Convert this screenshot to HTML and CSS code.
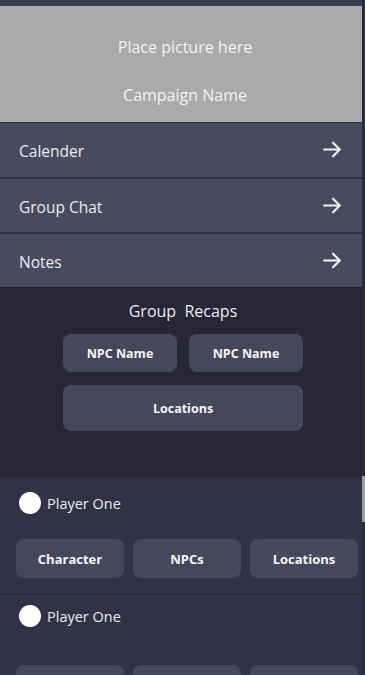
FILE: index.html
```html
<!DOCTYPE html>
<html lang="en">
<head>
    <meta charset="UTF-8">
    <meta name="viewport" content="width=device-width, initial-scale=1.0">
    <title>Campaign</title>
    <link rel="stylesheet" href="styles.css">
</head>
<body>
    <div class="page">
        <div class="app">
            <div class="top-strip"></div>

            <!-- cover picture placeholder -->
            <div class="cover">
                <p class="cover_text">Place picture here</p>
                <p class="cover_text">Campaign Name</p>
            </div>

            <div class="nav-row">
                <span>Calender</span>
                <svg class="arrow" viewBox="0 0 20 20"><path d="M2 10h15M10.5 3.5L17 10l-6.5 6.5"/></svg>
            </div>
            <div class="nav-row">
                <span>Group Chat</span>
                <svg class="arrow" viewBox="0 0 20 20"><path d="M2 10h15M10.5 3.5L17 10l-6.5 6.5"/></svg>
            </div>
            <div class="nav-row">
                <span>Notes</span>
                <svg class="arrow" viewBox="0 0 20 20"><path d="M2 10h15M10.5 3.5L17 10l-6.5 6.5"/></svg>
            </div>

            <div class="recaps">
                <h2 class="recaps_title">Group&nbsp; Recaps</h2>
                <div class="recaps_grid">
                    <button class="btn">NPC Name</button>
                    <button class="btn">NPC Name</button>
                    <button class="btn btn-wide">Locations</button>
                </div>
            </div>

            <div class="player">
                <div class="player_head">
                    <span class="avatar"></span>
                    <span>Player One</span>
                </div>
                <div class="player_btns">
                    <button class="btn btn-player">Character</button>
                    <button class="btn btn-player">NPCs</button>
                    <button class="btn btn-player">Locations</button>
                </div>
            </div>

            <div class="player player-loading">
                <div class="player_head">
                    <span class="avatar"></span>
                    <span>Player One</span>
                </div>
                <div class="player_btns">
                    <button class="btn btn-player">Character</button>
                    <button class="btn btn-player">NPCs</button>
                    <button class="btn btn-player">Locations</button>
                </div>
            </div>
        </div>

        <div class="scroll-track">
            <div class="scroll-thumb"></div>
        </div>
    </div>
</body>
</html>
```

FILE: styles.css
```css
body {
    margin: 0;
    background-color: #2c2c3d;
    font-family: 'Open Sans', 'Noto Sans', sans-serif;
    color: #ececf0;
}

.page {
    display: flex;
    height: 100vh;
    overflow: hidden;
}

.app {
    width: 362px;
    flex-shrink: 0;
}

.top-strip {
    height: 6px;
    background-color: #393a50;
}

.cover {
    height: 116px;
    box-sizing: border-box;
    padding-top: 14px;
    background-color: #aaaaaa;
    display: flex;
    flex-direction: column;
    align-items: center;
    justify-content: center;
    gap: 26px;
}

.cover_text {
    margin: 0;
    font-size: 16px;
    color: #f2f2f2;
    line-height: 22px;
    padding-left: 8px;
}

.nav-row {
    height: 55px;
    box-sizing: border-box;
    background-color: #484a5f;
    border-top: 1px solid #2f3042;
    display: flex;
    align-items: center;
    justify-content: space-between;
    padding: 2px 19px 0 19px;
    font-size: 15.5px;
}

.nav-row + .nav-row {
    border-top: 2px solid #2f3042;
}

.arrow {
    width: 21px;
    height: 21px;
    margin-top: -3px;
    fill: none;
    stroke: #f2f2f2;
    stroke-width: 2;
    stroke-linecap: round;
    stroke-linejoin: round;
}

.recaps {
    background-color: #262636;
    border-top: 1px solid #22222f;
    height: 190px;
    box-sizing: border-box;
    padding-top: 12px;
    padding-left: 4px;
}

.recaps_title {
    margin: 0 0 12px;
    text-align: center;
    font-size: 16px;
    font-weight: normal;
    line-height: 22px;
}

.recaps_grid {
    width: 240px;
    margin: 0 auto;
    display: grid;
    grid-template-columns: 1fr 1fr;
    gap: 13px 12px;
}

.btn {
    border: none;
    border-radius: 8px;
    background-color: #46475b;
    color: #f4f4f6;
    font-family: inherit;
    font-weight: bold;
    font-size: 12.5px;
    height: 38px;
    padding: 0;
}

.btn-wide {
    grid-column: span 2;
    height: 46px;
}

.player {
    background-color: #323246;
    border-top: 2px solid #2a2a3a;
    height: 116px;
    box-sizing: border-box;
    padding: 13px 0 0 16px;
}

.player_head {
    display: flex;
    align-items: center;
    gap: 6px;
    padding-left: 3px;
    font-size: 14.5px;
    height: 22px;
}

.avatar {
    width: 22px;
    height: 22px;
    border-radius: 50%;
    background-color: #ffffff;
}

.player_btns {
    display: flex;
    gap: 9px;
    margin-top: 25px;
}

.player-loading {
    padding-top: 10px;
}

.player-loading .player_btns {
    margin-top: 38px;
}

.btn-player {
    width: 108px;
    height: 39px;
    font-size: 13px;
    background-color: #45475b;
}

.scroll-track {
    flex: 1;
    background-color: #2a2a3a;
    padding-top: 476px;
}

.scroll-thumb {
    height: 46px;
    background-color: #9a9aa6;
}
```
